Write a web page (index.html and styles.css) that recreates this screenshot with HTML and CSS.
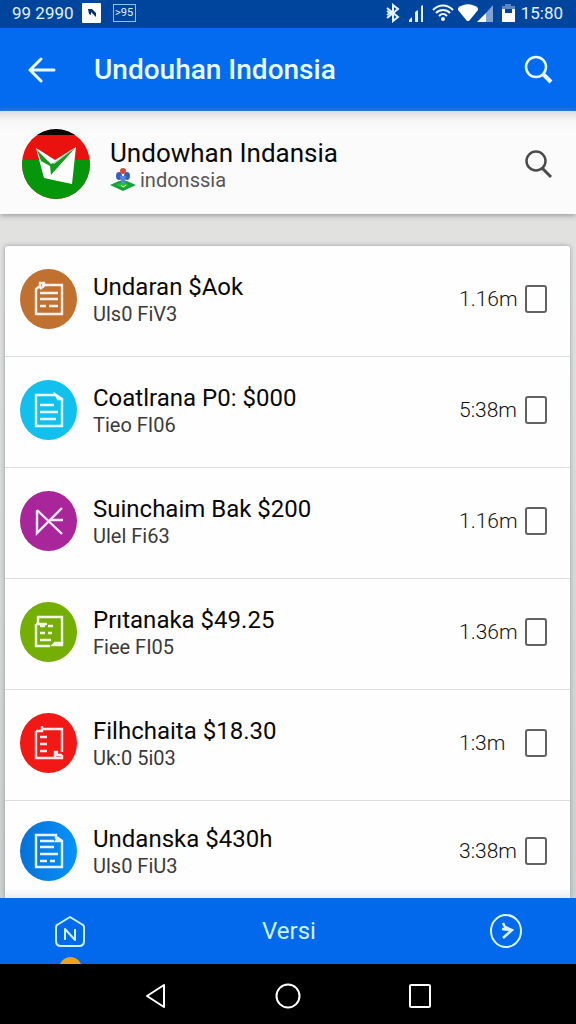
FILE: index.html
```html
<!DOCTYPE html>
<html lang="id">
<head>
<meta charset="utf-8">
<meta name="viewport" content="width=device-width, initial-scale=1">
<title>Undouhan Indonsia</title>
<link rel="stylesheet" href="styles.css">
</head>
<body>
<div class="screen">
  <div class="status">
    <span class="status-text">99 2990</span>
    <svg class="status-app" width="19" height="20" viewBox="0 0 19 20"><rect width="19" height="20" rx="1" fill="#fff"/><path d="M6 6h4l4 4v4l-3-3-2-2v3l-2-1z" fill="#06306e"/></svg>
    <span class="status-tag">&gt;95</span>
    <span class="status-right">
      <svg width="16" height="20" viewBox="0 0 16 20" fill="none" stroke="#e6f3ff" stroke-width="2"><path d="M2 5l11 9-5 4V2l5 4-11 9M2 8l3 2-3 2"/></svg>
      <svg class="bars" width="15" height="18" viewBox="0 0 15 18" fill="#e6f3ff"><path d="M0 18v-2l3-3v5zM6 18V8l3-2v12zM12 18V2l2-1v17z"/></svg>
      <svg class="wifi" width="22" height="18" viewBox="0 0 22 18" fill="none" stroke="#f2f9ff" stroke-width="2"><path d="M1 6c6-6 14-6 20 0M4 9c4-4 10-4 14 0M7 12c3-3 5-3 8 0"/><circle cx="11" cy="15" r="2" fill="#f2f9ff" stroke="none"/></svg>
      <svg class="signal" width="36" height="18" viewBox="0 0 36 18"><path d="M0 4c6-5 14-5 20 0v2L11 17h-2L0 6z" fill="#fff"/><path d="M19 18L28 9v9z" fill="#fff"/><path d="M28 9l7-8v17h-7z" fill="#7fa3d4"/></svg>
      <svg class="battery" width="13" height="18" viewBox="0 0 13 18"><path d="M0 2h3V0h6v2h4v3H0z" fill="#5f86bd"/><path d="M0 5h3v4h7V5h3v13H0z" fill="#fff"/></svg>
      <span class="status-text">15:80</span>
    </span>
  </div>

  <header class="appbar">
    <button class="icon-button back" aria-label="Kembali"><svg width="28" height="28" viewBox="0 0 28 28" fill="none" stroke="#e9fbff" stroke-width="3" stroke-linecap="round" stroke-linejoin="round"><path d="M26 14H2M13 3L2 14l11 11"/></svg></button>
    <h1 class="title">Undouhan Indonsia</h1>
    <button class="icon-button" aria-label="Cari"><svg width="30" height="30" viewBox="0 0 30 30" fill="none" stroke="#e9fbff"><circle cx="12" cy="12" r="10" stroke-width="2.5"/><path d="M19 19l8 8" stroke-width="4"/></svg></button>
  </header>

  <section class="profile">
    <svg class="avatar" viewBox="0 0 68 70"><defs><clipPath id="disc"><ellipse cx="34" cy="35" rx="34" ry="35"/></clipPath></defs><g clip-path="url(#disc)"><rect width="68" height="70" fill="#e9120f"/><rect width="68" height="6" fill="#090606"/><rect y="31" width="68" height="39" fill="#05960c"/></g><path d="M14 19l19 12L54 18l-4 37-28-6z" fill="#fff"/><path d="M15 21l14 14 2-1L53 19 29 46l-1-9-9-5z" fill="#149b1b"/><path d="M16 20l16 15L53 19 33 32z" fill="#fff" opacity=".7"/></svg>
    <div class="profile-text">
      <h2 class="name">Undowhan Indansia</h2>
      <p class="place"><svg width="26" height="24" viewBox="0 0 26 24"><path d="M0 17l9-4h8l9 4-13 6z" fill="#18a13a"/><path d="M6 17l7-3 6 3-6 3z" fill="#2fbd38"/><ellipse cx="9" cy="8" rx="3" ry="4" fill="#2f62bd"/><ellipse cx="17" cy="8" rx="3" ry="4" fill="#2f62bd"/><path d="M10 8h6l-1 7h-4z" fill="#5a85d2"/><circle cx="13" cy="3" r="3" fill="#dc4636"/><path d="M11 17l2 2 3-2" fill="none" stroke="#e6ff8a"/></svg><span>indonssia</span></p>
    </div>
    <button class="icon-button" aria-label="Cari profil"><svg width="30" height="30" viewBox="0 0 30 30" fill="none" stroke="#4b4b4b"><circle cx="12" cy="12" r="9.5" stroke-width="2.5"/><path d="M18 19l9 9" stroke-width="3"/></svg></button>
  </section>

  <main class="content">
    <ul class="list">
      <li class="row">
        <span class="badge brown"><svg viewBox="0 0 30 36"><path d="M8 4h20v29H2V8l4-3V2h4v3L6 8M6 12h18M6 18h18M6 25h6M15 25h9"/></svg></span>
        <label class="info" for="f1"><strong>Undaran $Aok</strong><span>Uls0 FiV3</span></label>
        <span class="time">1.16m</span><input class="check" type="checkbox" id="f1">
      </li>
      <li class="row">
        <span class="badge cyan"><svg viewBox="0 0 30 36"><path d="M22 3H2v31h26V7h-4l-2-4 6 4M6 13h14M6 20h18M6 27h16"/></svg></span>
        <label class="info" for="f2"><strong>Coatlrana P0: $000</strong><span>Tieo FI06</span></label>
        <span class="time">5:38m</span><input class="check" type="checkbox" id="f2">
      </li>
      <li class="row">
        <span class="badge purple"><svg viewBox="0 0 30 36"><path d="M3 7v23L28 5M3 7l25 24M16 17h13"/></svg></span>
        <label class="info" for="f3"><strong>Suinchaim Bak $200</strong><span>Ulel Fi63</span></label>
        <span class="time">1.16m</span><input class="check" type="checkbox" id="f3">
      </li>
      <li class="row">
        <span class="badge green"><svg viewBox="0 0 30 36"><path d="M4 10V3h24v27M2 10v22h14M2 10h11M6 12h5M14 12h5M6 19h5M14 19h4M6 26h11"/><path d="M19 31h9v-2h-7z"/></svg></span>
        <label class="info" for="f4"><strong>Prıtanaka $49.25</strong><span>Fiee FI05</span></label>
        <span class="time">1.36m</span><input class="check" type="checkbox" id="f4">
      </li>
      <li class="row">
        <span class="badge red"><svg viewBox="0 0 30 36"><path d="M9 4h19v23M2 6v27h26v-3M2 6h6V1M6 12h7M6 19h7M6 26h7M21 32v-5h2v3h5"/></svg></span>
        <label class="info" for="f5"><strong>Filhchaita $18.30</strong><span>Uk:0 5i03</span></label>
        <span class="time">1:3m</span><input class="check" type="checkbox" id="f5">
      </li>
      <li class="row">
        <span class="badge blue"><svg viewBox="0 0 30 36"><path d="M22 6V2H2v32h26V8h-6l2-3 4 3M6 8h14M6 14h14M6 21h18M6 28h7M16 28h5"/></svg></span>
        <label class="info" for="f6"><strong>Undanska $430h</strong><span>Uls0 FiU3</span></label>
        <span class="time">3:38m</span><input class="check" type="checkbox" id="f6">
      </li>
    </ul>
  </main>

  <footer class="tabs">
    <button class="tab home" aria-label="Beranda"><svg width="32" height="32" viewBox="0 0 32 32" fill="none" stroke="#cdf3ff" stroke-width="2" stroke-linejoin="round"><path d="M16 2l13 8q1 1 1 2v14q0 5-5 5H7q-5 0-5-5V12q0-1 1-2z"/><path d="M11 25V14l10 11V14"/></svg><i class="dot"></i></button>
    <button class="tab">Versi</button>
    <button class="tab" aria-label="Lanjut"><svg width="32" height="34" viewBox="0 0 32 34" fill="none" stroke="#d8f6ff"><ellipse cx="16" cy="17" rx="15" ry="16" stroke-width="2"/><path d="M13 9l2 4 7 3-9 8M12 15l9 1" stroke-width="2.5"/></svg></button>
  </footer>
  <nav class="system">
    <button class="sys" aria-label="Back"><svg width="24" height="28" viewBox="0 0 24 28"><path d="M20 3L3 14l17 11z"/></svg></button>
    <button class="sys" aria-label="Home"><svg width="28" height="28" viewBox="0 0 28 28"><circle cx="14" cy="14" r="11.5"/></svg></button>
    <button class="sys" aria-label="Recent"><svg width="24" height="28" viewBox="0 0 24 28"><rect x="2" y="3" width="20" height="22" rx="1"/></svg></button>
  </nav>
</div>
</body>
</html>
```

FILE: styles.css
```css
* { box-sizing: border-box; }
body {
  margin: 0;
  font-family: Roboto, "Liberation Sans", sans-serif;
  color: #080808;
}
h1, h2, p, ul { margin: 0; padding: 0; }
button {
  border: 0;
  padding: 0;
  background: none;
  font: inherit;
  color: inherit;
}
svg { display: block; flex: none; }
.screen {
  display: flex;
  flex-direction: column;
  height: 100vh;
  overflow: hidden;
}
.status {
  display: flex;
  align-items: center;
  flex: none;
  height: 28px;
  padding: 0 13px 3px 12px;
  background: #00459d;
  color: #e6f3ff;
}
.status-text { font-size: 17px; line-height: 24px; }
.status-app { margin-left: 8px; }
.status-tag {
  margin-left: 12px;
  width: 23px;
  height: 18px;
  border: 1px solid #8fc4f2;
  font-size: 11px;
  line-height: 16px;
  text-align: center;
}
.status-right {
  display: flex;
  align-items: center;
  margin-left: auto;
}
.bars { margin-left: 8px; }
.wifi { margin-left: 8px; }
.signal { margin-left: 4px; }
.battery { margin: 0 6px 0 8px; }

.appbar {
  display: flex;
  align-items: center;
  flex: none;
  height: 83px;
  padding: 0 22px 0 28px;
  background: #036bef;
  color: #e9fbff;
}
.icon-button { flex: none; }
.title {
  flex: 1;
  padding-left: 38px;
  font-size: 28px;
  line-height: 36px;
  font-weight: 500;
}
.profile {
  display: flex;
  align-items: center;
  flex: none;
  height: 103px;
  padding: 2px 22px 0;
  background: linear-gradient(#dcdcdf, #f7f7f8 10px, #fbfbfb 20px);
  box-shadow: 0 1px 6px #8c8e8e;
  position: relative;
}
.avatar { width: 68px; height: 70px; }
.profile-text { flex: 1; padding: 2px 0 0 20px; }
.name {
  font-size: 26px;
  line-height: 30px;
  font-weight: 400;
}
.place {
  display: flex;
  align-items: center;
  gap: 4px;
  font-size: 20px;
  line-height: 24px;
  color: #565656;
}

.content {
  flex: 1;
  min-height: 0;
  padding: 32px 6px 0 5px;
  background: linear-gradient(#e1e2e0, #cbd0d0);
  overflow: hidden;
}
.list {
  list-style: none;
  height: 100%;
  overflow: hidden;
  border-radius: 3px 3px 0 0;
  background: linear-gradient(#fefefe calc(100% - 10px), #eceeef);
  box-shadow: 0 0 4px #929696;
}
.row {
  display: flex;
  align-items: center;
  height: 111px;
  padding: 0 23px 4px 15px;
  border-bottom: 1px solid #dcdddd;
}
.row:last-child { height: 104px; border-bottom: 0; }
.badge {
  display: grid;
  place-items: center;
  flex: none;
  width: 57px;
  height: 60px;
  border-radius: 50%;
}
.badge svg {
  width: 30px;
  height: 36px;
  fill: none;
  stroke: #fff;
  stroke-width: 2.4;
  stroke-opacity: .9;
}
.brown { background: #c07130; }
.cyan { background: #12c0ee; }
.purple { background: #a8269a; }
.green { background: #75ae05; }
.red { background: #f21815; }
.blue { background: linear-gradient(90deg, #0572d8, #0792fa); }
.info {
  flex: 1;
  min-width: 0;
  padding: 2px 0 0 16px;
}
.info strong, .info span { display: block; white-space: nowrap; }
.info strong {
  font-size: 24px;
  line-height: 28px;
  font-weight: 400;
}
.info span {
  font-size: 20px;
  line-height: 26px;
  color: #3a3a3a;
}
.time {
  width: 58px;
  margin-right: 8px;
  font-size: 21px;
  line-height: 24px;
  font-weight: 300;
  color: #111;
  white-space: nowrap;
}
.check {
  appearance: none;
  flex: none;
  width: 22px;
  height: 28px;
  margin: 0;
  border: 2px solid #626262;
  border-radius: 3px;
}

.tabs {
  display: grid;
  grid-template-columns: 1fr 1fr 1fr;
  justify-items: center;
  flex: none;
  height: 66px;
  padding: 0 0 0 2px;
  background: #0369ec;
  color: #cdf3ff;
  overflow: hidden;
}
.tab { font-size: 24px; line-height: 32px; }
.tab:first-child { justify-self: start; margin-left: 52px; }
.tab:last-child { justify-self: end; margin-right: 54px; }
.home { position: relative; }
.dot {
  position: absolute;
  left: 5px;
  bottom: -17px;
  width: 23px;
  height: 24px;
  border-radius: 50%;
  background: #efa21d;
}
.system {
  display: flex;
  align-items: center;
  justify-content: center;
  gap: 106px;
  flex: none;
  height: 60px;
  padding: 4px 0 0;
  background: #000;
}
.system svg { fill: none; stroke: #fff; stroke-width: 2; stroke-linejoin: round; }
```
